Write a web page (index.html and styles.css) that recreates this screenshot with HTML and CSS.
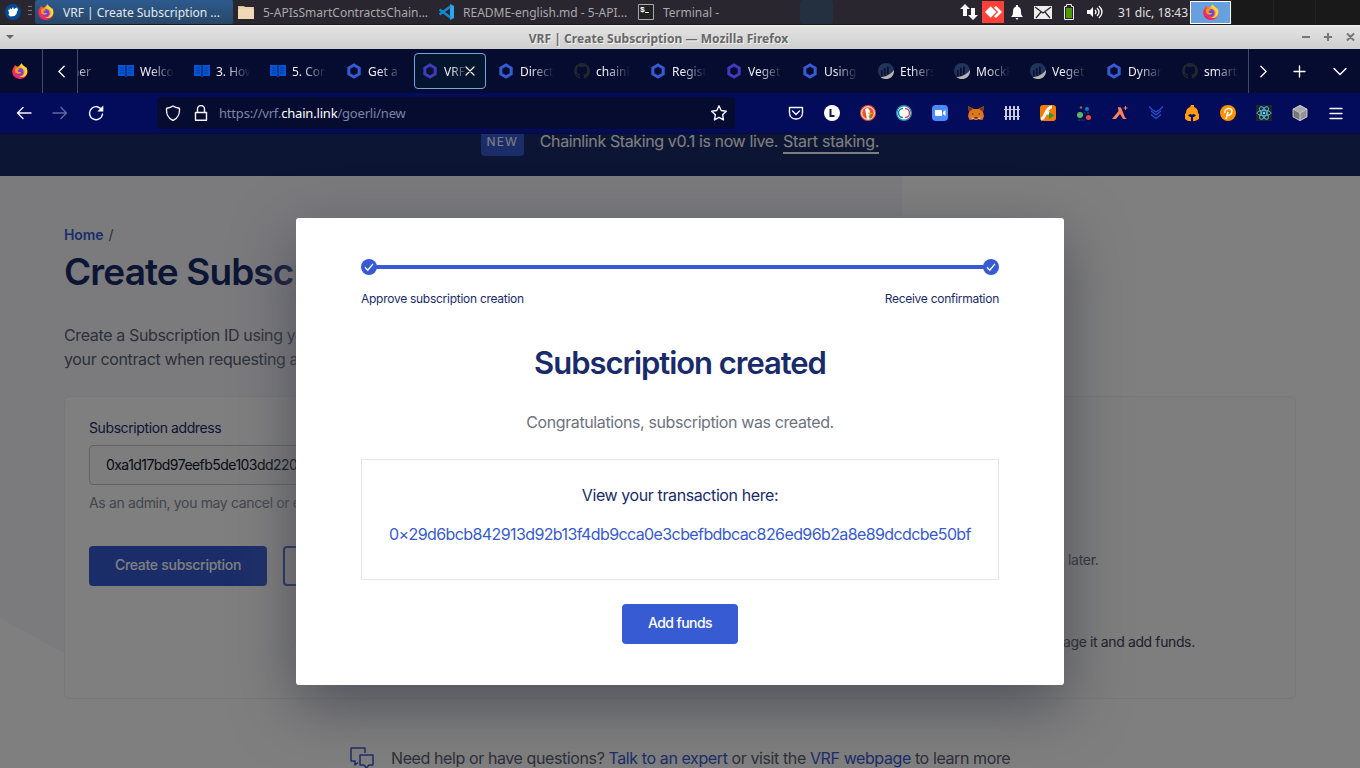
FILE: index.html
```html
<!DOCTYPE html>
<html lang="en">
<head>
<meta charset="utf-8">
<title>VRF | Create Subscription</title>
<link rel="stylesheet" href="styles.css">
</head>
<body>
<svg class="defs" aria-hidden="true">
  <defs>
    <radialGradient id="fx" cx=".75" cy=".15" r="1"><stop offset="0" stop-color="#fff44f"/><stop offset=".35" stop-color="#ff980e"/><stop offset=".65" stop-color="#ff3647"/><stop offset="1" stop-color="#e31587"/></radialGradient>
    <symbol id="firefox" viewBox="0 0 16 16"><path fill="url(#fx)" d="M2.2 3.6 3 2l1.6 1.5 2 .1L9.600 .2l1.200 2 3 2.300c2.300 3.200 1.900 7-.4 9.300-3 3-8 2.900-11 0C.1 11.500-.4 7.500 1.200 5z"/><circle cx="7.800" cy="8.700" r="3.700" fill="#7542e5"/><path fill="#ff9a13" d="M3.300 5.500c2-1.200 3.600-.4 5 .6-1.700.3-2.500 1-2.700 1.800.6 1.300 2.500 1.300 3.600 1.100-.7 1.900-3 2.300-5 1.100-1.200-1-1.500-2.800-.9-4.600z"/><path fill="#ffd53c" d="M9.600.2c0 2.500 2.600 3.500 2.900 6.500 1 4-2 7-5.500 6.800 5 2 9-1.500 8.300-6.500-.3-1.500-1-2.600-1.500-3.200v1.500C13 3.200 10.500 3 9.600.2z"/></symbol>
    <symbol id="hex" viewBox="0 0 16 16"><path fill="none" stroke="currentColor" stroke-width="3" d="m8 2 5.200 3v6L8 14l-5.200-3V5z"/></symbol>
    <symbol id="book" viewBox="0 0 16 16"><path fill="#0056d6" d="M0 2h7l1 .8L9 2h7v11H9.500L8 14l-1.500-1H0z"/><path d="M8 3v10" stroke="#060c30" stroke-width=".9"/><path d="M2 5h4M2 7.500h4M2 10h4M10 5h4M10 7.500h4M10 10h4" stroke="#06388f" stroke-width=".9"/></symbol>
    <symbol id="github" viewBox="0 0 16 16"><path fill="#22272e" d="M8 0a8 8 0 0 0-2.500 15.600c.4 0 .5-.2.500-.4v-1.500c-2.200.5-2.700-1-2.700-1-.4-.9-.9-1.200-.9-1.200-.7-.5.100-.5.100-.5.800.100 1.200.9 1.200.9.700 1.200 1.900.9 2.300.7.100-.5.300-.9.500-1.100-1.800-.2-3.600-.9-3.600-4 0-.9.300-1.600.8-2.100-.100-.2-.4-1 .100-2.200 0 0 .7-.2 2.200.8a7.600 7.600 0 0 1 4 0c1.500-1 2.200-.8 2.200-.8.400 1.200.2 2 .100 2.200.5.500.8 1.200.8 2.100 0 3.100-1.900 3.800-3.700 4 .3.300.6.800.6 1.500v2.200c0 .2.100.5.500.4A8 8 0 0 0 8 0z"/></symbol>
    <symbol id="ether" viewBox="0 0 16 16"><circle cx="8" cy="8" r="8" fill="#203559"/><path fill="#070c31" d="M3 7h1.600v6L3 13.500zM6 5h1.600v7.500L6 13zM9 3.500h1.700v7L9 12z"/><path fill="#b7b3ae" d="M2.500 14.200C8 14 13 11 16 7c.3 6-4 9-8 9-2 0-4-.7-5.500-1.800z"/></symbol>
    <symbol id="check" viewBox="0 0 16 16"><circle cx="8" cy="8" r="8" fill="#375bd2"/><path d="m4 8.300 2.800 2.900L12 4.800" fill="none" stroke="#fff" stroke-width="1.300"/></symbol>
  </defs>
</svg>

<header class="panel">
  <div class="panel-left">
    <svg class="mouse" viewBox="0 0 16 16"><circle cx="8" cy="8" r="8" fill="#034a94"/><path fill="#fff" d="M3 5.500 4.500 6 5 4l1.500 1.500L8 3l.8 2L12 3.500l1 2.500-1 1.500L11.500 10l-2 2-4 .5L3.500 11 4 9z"/></svg>
    <span class="grip"></span>
    <div class="task task-active"><svg class="i16"><use href="#firefox"/></svg><span>VRF | Create Subscription ...</span></div>
    <div class="task task-files"><svg class="i16" viewBox="0 0 16 16"><path fill="#d7b98c" d="M0 2h6l1 1h9v12H0z"/><path fill="#efd9b7" d="M0 5h16v10H0z"/><path stroke="#fff0d7" d="M1 4h14"/></svg><span>5-APIsSmartContractsChain...</span></div>
    <div class="task task-code"><svg class="i16" viewBox="0 0 16 16"><path fill="#29a9ee" d="m12 0 4 2v12l-4 2z"/><path fill="none" stroke="#168bd3" stroke-width="2.200" d="m12.500 2.500-11 8M1.500 5.500l11 8"/></svg><span>README-english.md - 5-API...</span></div>
    <div class="task task-term"><svg class="i16" viewBox="0 0 16 16"><path fill="#222" stroke="#aaa" d="M.5.500h15v15H.500z"/><text x="2" y="8" class="prompt">$</text><path stroke="#fff" d="M7 8.500h4"/></svg><span>Terminal -</span></div>
    <span class="ghost"></span>
  </div>
  <div class="tray">
    <svg class="t-net" viewBox="0 0 18 16"><path fill="#fff" d="m5 0 5 5H7v7H3V5H0zm8 16-5-5h3V4h4v7h3z"/></svg>
    <span class="anydesk"><svg viewBox="0 0 18 12"><path fill="#fff" d="m6 0 6 6-6 6-6-6zm5 0h1l6 6-6 6h-1l-1.500-1.500L14 6 9.500 1.500z"/></svg></span>
    <svg class="t-bell" viewBox="0 0 12 15"><path fill="#fff" d="M5 0h2v1.500c2 .5 3 2.500 3 5 0 3 .5 4 2 5.500H0c1.500-1.500 2-2.500 2-5.500 0-2.500 1-4.500 3-5zM4.500 13h3L6 15z"/></svg>
    <svg class="t-mail" viewBox="0 0 18 13"><path fill="#eee" d="M0 0h18v13H0z"/><path fill="none" stroke="#26242b" stroke-width="1.200" d="m1 1 8 6 8-6M2 12l5-6m9 6-5-6"/></svg>
    <svg class="t-bat" viewBox="0 0 10 16"><path fill="none" stroke="#eee" d="M.500 2.500h2v-2h5v2h2v13h-9z"/><path fill="#4e9a06" d="M2 4h6v10H2z"/></svg>
    <svg class="t-vol" viewBox="0 0 16 14"><path fill="#fff" d="M0 5h3l3-3v10L3 9H0z"/><path fill="none" stroke="#fff" stroke-width="1.300" d="M8 5q2 2 0 4M10 3q4 4 0 8M12 1q6 6 0 12"/></svg>
    <span class="clock">31 dic, 18:43</span>
    <span class="desk desk-on"><svg class="i16"><use href="#firefox"/></svg></span><span class="desk"></span><span class="desk"></span><span class="desk desk-last"></span>
  </div>
</header>

<div class="titlebar">
  <svg class="menu-arrow" viewBox="0 0 8 4"><path fill="#666" d="M0 0h8L4 4z"/></svg>
  <span class="win-title">VRF | Create Subscription — Mozilla Firefox</span>
  <svg class="win-btns" viewBox="0 0 54 10"><path fill="none" stroke="#777" stroke-width="2" d="M1 5h8M23 5h8M27 1v8M46 1.500l7 7M53 1.500l-7 7"/></svg>
</div>

<div class="tabs">
  <div class="fx-view"><svg class="i16"><use href="#firefox"/></svg></div>
  <div class="scroll scroll-l"><svg viewBox="0 0 8 14"><path d="M7 1 1 7l6 6"/></svg></div>
  <div class="tab-strip">
    <div class="tab tab-cut"><i class="i16"></i><span>cher</span></div>
    <div class="tab"><svg class="i16"><use href="#book"/></svg><span>Welco</span></div>
    <div class="tab"><svg class="i16"><use href="#book"/></svg><span>3. How</span></div>
    <div class="tab"><svg class="i16"><use href="#book"/></svg><span>5. Con</span></div>
    <div class="tab"><svg class="i16 blue"><use href="#hex"/></svg><span>Get a</span></div>
    <div class="tab tab-on"><svg class="i16 violet"><use href="#hex"/></svg><span>VRF</span><svg class="close" viewBox="0 0 8 8"><path d="m0 0 8 8M8 0 0 8"/></svg></div>
    <div class="tab"><svg class="i16 blue"><use href="#hex"/></svg><span>Direct</span></div>
    <div class="tab"><svg class="i16"><use href="#github"/></svg><span>chainl</span></div>
    <div class="tab"><svg class="i16 blue"><use href="#hex"/></svg><span>Regist</span></div>
    <div class="tab"><svg class="i16 violet"><use href="#hex"/></svg><span>Veget</span></div>
    <div class="tab"><svg class="i16 blue"><use href="#hex"/></svg><span>Using</span></div>
    <div class="tab"><svg class="i16"><use href="#ether"/></svg><span>Ethers</span></div>
    <div class="tab"><svg class="i16"><use href="#ether"/></svg><span>MockF</span></div>
    <div class="tab"><svg class="i16"><use href="#ether"/></svg><span>Veget</span></div>
    <div class="tab"><svg class="i16 blue"><use href="#hex"/></svg><span>Dynar</span></div>
    <div class="tab"><svg class="i16"><use href="#github"/></svg><span>smart</span></div>
  </div>
  <div class="tab-tools">
    <svg class="chev-r" viewBox="0 0 8 14"><path d="m1 1 6 6-6 6"/></svg>
    <svg class="plus" viewBox="0 0 12 12"><path d="M6 0v12M0 6h12"/></svg>
    <svg class="chev-d" viewBox="0 0 12 7"><path d="m0 .5 6 6 6-6"/></svg>
  </div>
</div>

<div class="nav">
  <div class="nav-btns">
    <svg class="i16" viewBox="0 0 16 16"><path d="M15 8H1.500M7 2.500 1.500 8 7 13.500"/></svg>
    <svg class="i16 dim" viewBox="0 0 16 16"><path d="M1 8h13.500M9 2.500 14.500 8 9 13.500"/></svg>
    <svg class="i16" viewBox="0 0 16 16"><path d="M14 5.500A6.500 6.500 0 1 0 14.500 9"/><path class="solid" d="M15.300.5v6H9.300z"/></svg>
  </div>
  <div class="url">
    <svg class="i16" viewBox="0 0 16 16"><path d="M8 1c2 1.600 4.300 2 6.300 2.200.8 5-1.500 10-6.300 12.300C3.200 13.200.9 8.200 1.700 3.200 3.700 3 6 2.600 8 1z"/></svg>
    <svg class="i16 lock" viewBox="0 0 16 16"><path d="M2.500 7.500h11v7.700h-11zM4.500 7.500V4a3.500 3.500 0 0 1 7 0v3.500"/></svg>
    <span class="addr">https://vrf.<b>chain.link</b>/goerli/new</span>
    <svg class="i16 star" viewBox="0 0 16 16"><path d="m8 .8 2.200 4.700 5.100.7-3.700 3.500.9 5.200L8 12.400l-4.500 2.500.9-5.200L.7 6.200l5.100-.7z"/></svg>
  </div>
  <div class="exts">
    <svg viewBox="0 0 16 16"><path class="ln" d="M1.500 2.500h13V8c0 8-13 8-13 0zM4.500 6 8 9.500 11.500 6"/></svg>
    <svg viewBox="0 0 16 16"><circle cx="8" cy="8" r="8" fill="#fff"/><path d="M6.500 4v7h4" fill="none" stroke="#111b43" stroke-width="2"/></svg>
    <svg viewBox="0 0 16 16"><circle cx="8" cy="8" r="8" fill="#e8532c"/><circle cx="8" cy="8" r="6.300" fill="none" stroke="#fff"/><path fill="#fff" d="M5 4c3-2 5 0 5 4l-1 6H7z"/><path fill="#f7b500" d="M8 7.500 13 8l-4 2z"/><path fill="#3ca344" d="m8 11 4-.5V13z"/></svg>
    <svg viewBox="0 0 16 16"><circle cx="8" cy="8" r="7.300" fill="#fff" stroke="#2191bd" stroke-width="1.400"/><path fill="none" stroke="#1684b4" stroke-width="1.500" d="M7 3.500a4.500 4.500 0 0 0 0 9"/><path fill="none" stroke="#e2443a" stroke-width="1.500" d="M9 3.500a4.500 4.500 0 0 1 0 9"/></svg>
    <svg viewBox="0 0 16 16"><rect width="16" height="16" rx="4" fill="#4a8cff"/><path fill="#fff" d="M3 5h6q1 0 1 1v5H4q-1 0-1-1zm8 2 2.500-2v6L11 9z"/></svg>
    <svg viewBox="0 0 16 16"><path fill="#e2761b" d="m0 1 6 3h4l6-3-1 6 1 4-1.500 4-4-1-1 1h-3l-1-1-4 1L0 11l1-4z"/><path fill="#763d16" d="m0 1 5 3-4 3zm16 0-5 3 4 3z"/><path fill="#233447" d="m4 8 2 1.500H4zm8 0-2 1.500h2zM6.500 12h3v1.500h-3z"/><path fill="#d7c1b3" d="m5 12 1 2-3 .5zm6 0-1 2 3 .5z"/></svg>
    <svg viewBox="0 0 16 16"><path stroke="#c9cae0" stroke-width="2" d="M2 1v14M6 1v14M10 1v14M14 1v14"/><path stroke="#c9cae0" d="M0 4.500h16M0 11.500h16"/></svg>
    <svg viewBox="0 0 16 16"><rect width="16" height="16" rx="3" fill="#f57c00"/><path fill="none" stroke="#fff" stroke-width="3" d="M1 14C6 14 5 2 12 2M5 8h5"/><path fill="#149b48" d="m9 7 5 3.500L9 14z"/></svg>
    <svg viewBox="0 0 16 16"><circle cx="4" cy="10" r="3" fill="#58b868"/><circle cx="11" cy="4" r="2" fill="#087fc3"/><circle cx="12.500" cy="12.500" r="2.500" fill="#f04938"/><circle cx="5" cy="2.500" r="1.300" fill="#77763b"/><path stroke="#34405c" stroke-dasharray="2 1" d="M2 15h7M8 8h5"/></svg>
    <svg viewBox="0 0 16 16"><path fill="#ff805f" d="m6 2 3 .5 4 10 2 1.500h-4L8 9l-4 5H0l5-6 1.500-2z"/><path stroke="#ff805f" d="M13.500 1v4M11.500 3h4"/></svg>
    <svg viewBox="0 0 16 16"><path fill="none" stroke="#2852cf" stroke-width="1.300" d="m1 1.500 3 3 4 2.500 4-2.500 3-3M3 6l5 4 5-4M3 9.500l5 4 5-4"/></svg>
    <svg viewBox="0 0 16 16"><path fill="#ff9c12" d="M7 0h3v2c3 1 4 3 4 6l1 1v5l-4 2H9v-4h1l2-2-3-1-1 1-1-1-3 1 2 2h1v4H4l-3-2V9l1-1c0-3 1-5 4-6z"/></svg>
    <svg viewBox="0 0 16 16"><circle cx="8" cy="8" r="8" fill="#ff9100"/><path fill="none" stroke="#fff" stroke-width="1.500" d="m6 14 2-7M5 8c-1-5 7-6 7-2s-4 5-5 4"/></svg>
    <svg viewBox="0 0 16 16"><path fill="#20232a" d="M0 0h16v16H0z"/><g fill="none" stroke="#54b9d1"><ellipse cx="8" cy="8" rx="7" ry="2.700"/><ellipse cx="8" cy="8" rx="7" ry="2.700" transform="rotate(60 8 8)"/><ellipse cx="8" cy="8" rx="7" ry="2.700" transform="rotate(120 8 8)"/></g><circle cx="8" cy="8" r="1.300" fill="#61dafb"/></svg>
    <svg viewBox="0 0 16 16"><path fill="#aaa" d="m8 0 7 4-7 4-7-4z"/><path fill="#777" d="m1 4 7 4v8l-7-4z"/><path fill="#929292" d="m15 4-7 4v8l7-4z"/><path fill="none" stroke="#ddd" stroke-width=".8" d="m8 .4 7 3.800v7.600L8 15.600l-7-3.800V4.200zM1 4l7 4 7-4M8 8v8"/></svg>
    <svg viewBox="0 0 16 16"><path class="ln" d="M2 3.500h12M2 8.500h12M2 13.500h12"/></svg>
  </div>
</div>

<main class="page">
  <div class="banner"><span class="badge">NEW</span><span class="banner-text">Chainlink Staking v0.1 is now live.</span><a class="banner-link">Start staking.</a></div>
  <div class="content">
    <div class="crumb"><a>Home</a><span>/</span></div>
    <h1>Create Subscription</h1>
    <p class="intro">Create a Subscription ID using your wallet<br>your contract when requesting a random</p>
    <section class="card">
      <div class="form">
        <label>Subscription address</label>
        <div class="field">0xa1d17bd97eefb5de103dd220</div>
        <p class="hint">As an admin, you may cancel or edit</p>
        <div class="actions"><a class="btn">Create subscription</a><a class="btn-outline"></a></div>
      </div>
      <div class="steps"><p class="step-a">later.</p><p class="step-b">age it and add funds.</p></div>
    </section>
    <div class="help">
      <svg viewBox="0 0 24 24"><path d="M8 15.500l-3 2.500v-4H1V1h14v5M10 8h13v10h-4l-2.500 3L14 18h-4z"/></svg>
      <p>Need help or have questions? <a>Talk to an expert</a> or visit the <a>VRF webpage</a> to learn more</p>
    </div>
  </div>
  <div class="overlay">
    <div class="modal">
      <div class="progress"><svg class="i16"><use href="#check"/></svg><span class="line"></span><svg class="i16"><use href="#check"/></svg></div>
      <div class="stages"><span class="stage-a">Approve subscription creation</span><span class="stage-b">Receive confirmation</span></div>
      <h2>Subscription created</h2>
      <p class="congrats">Congratulations, subscription was created.</p>
      <div class="tx"><p>View your transaction here:</p><a>0×29d6bcb842913d92b13f4db9cca0e3cbefbdbcac826ed96b2a8e89dcdcbe50bf</a></div>
      <a class="btn add">Add funds</a>
    </div>
  </div>
</main>
</body>
</html>
```
FILE: styles.css
```css
* { box-sizing: border-box; }
body { margin: 0; width: 1360px; height: 768px; overflow: hidden; display: flex; flex-direction: column; font-family: Inter, "Liberation Sans", sans-serif; }
h1, h2, p { margin: 0; }
.defs { position: absolute; width: 0; height: 0; }
.i16 { width: 16px; height: 16px; flex: none; }

/* desktop panel */
.panel { height: 25px; flex: none; display: flex; justify-content: space-between; background: #29262f; border-bottom: 1px solid #1b1a1e; font: 12px "Noto Sans", sans-serif; color: #aaa9ab; }
.panel-left { display: flex; align-items: center; padding-left: 5px; }
.mouse { width: 16px; height: 16px; }
.grip { width: 4px; height: 12px; margin: 0 3px 0 7px; background: repeating-linear-gradient(#77757a 0 1px, transparent 1px 4px); }
.task { height: 24px; display: flex; align-items: center; gap: 9px; white-space: nowrap; }
.task-active { width: 198px; padding-left: 3px; background: linear-gradient(#2d5a8e, #284767); border-radius: 2px; color: #e4e8ed; }
.task-files { padding-left: 5px; width: 205px; }
.task-code { width: 200px; }
.task-term { width: 162px; }
.prompt { fill: #fff; font: bold 8px "Liberation Mono", monospace; }
.ghost { width: 33px; height: 24px; background: #24303f; border-radius: 3px; }
.tray { display: flex; align-items: center; }
.t-net { width: 18px; height: 16px; margin-right: 4px; }
.anydesk { width: 22px; height: 22px; background: #ff4137; display: grid; place-items: center; margin-right: 7px; }
.anydesk svg { width: 17px; height: 12px; }
.t-bell { width: 12px; height: 15px; margin-right: 11px; }
.t-mail { width: 18px; height: 13px; margin-right: 12px; }
.t-bat { width: 10px; height: 16px; margin-right: 13px; }
.t-vol { width: 16px; height: 14px; margin-right: 15px; }
.clock { width: 72px; color: #e0e0e1; white-space: nowrap; }
.desk { width: 42px; height: 24px; background: #191919; border-left: 1px solid #222; }
.desk-on { width: 41px; height: 23px; background: #68a0df; border: 1px solid #fff; display: grid; place-items: center; }
.desk-last { width: 45px; }

/* window title */
.titlebar { height: 24px; flex: none; display: flex; align-items: center; justify-content: space-between; padding: 0 5px 0 6px; background: linear-gradient(#f5f5f5, #e2e2e2 2px, #cfcfcf); color: #676767; font: bold 12px "Noto Sans", sans-serif; text-shadow: 1px 1px #f2f2f2; }
.menu-arrow { width: 8px; height: 4px; }
.win-title { padding-top: 2px; margin-left: 2px; letter-spacing: .04px; }
.win-btns { width: 54px; height: 10px; }

/* tabs */
.tabs { height: 44px; flex: none; display: flex; background: #060c30; font: 12px "Noto Sans", sans-serif; color: #f0f1fa; }
.tabs svg path { stroke-linecap: round; }
.fx-view { width: 43px; border-right: 1px solid #43476a; display: grid; place-items: center; padding-right: 3px; }
.scroll { width: 35px; border-right: 1px solid #43476a; display: grid; place-items: center; padding-left: 2px; }
.scroll svg, .chev-r { width: 7px; height: 13px; }
.scroll path, .tab-tools path { fill: none; stroke: #fff; stroke-width: 1.500; }
.close path { fill: none; stroke: #fff; stroke-width: 1.200; }
.tab-strip { width: 1170px; flex: none; display: flex; overflow: hidden; align-items: center; }
.tab { width: 72px; height: 36px; flex: none; margin: 0 2px; padding-left: 8px; display: flex; align-items: center; gap: 6px; white-space: nowrap; }
.tab-cut { margin-left: -44px; padding-left: 10px; }
.tab span { width: 34px; -webkit-mask-image: linear-gradient(90deg, #000 30%, transparent); mask-image: linear-gradient(90deg, #000 30%, transparent); }
.tab-on { border: 1px solid #7ba2e6; border-radius: 4px; background: #05152f; padding-left: 7px; }
.tab-on span { width: 23px; }
.tab-on .close { width: 8px; height: 8px; margin-left: -7px; overflow: visible; }
.blue { color: #375bd2; }
.violet { color: #4339bd; }
.tab-tools { flex: 1; border-left: 1px solid #43476a; display: flex; align-items: center; padding-left: 11px; }
.plus { width: 11px; height: 11px; margin-left: 27px; overflow: visible; }
.chev-d { width: 12px; height: 7px; margin-left: 29px; overflow: visible; }

/* navigation */
.nav { height: 41px; flex: none; display: flex; align-items: center; background: #030b5b; border-bottom: 1px solid #080b35; }
.nav-btns { width: 157px; display: flex; gap: 20px; padding-left: 16px; }
.nav-btns path, .url path, .ln { fill: none; stroke: #f4f5ff; stroke-width: 1.400; stroke-linejoin: round; stroke-linecap: round; }
.nav-btns .dim { opacity: .4; }
.nav-btns .solid { fill: #fff; stroke: none; }
.url { width: 578px; height: 32px; background: #060c30; border-radius: 4px; display: flex; align-items: center; padding: 0 8px; font: 13px "Noto Sans", sans-serif; color: #7e83a6; }
.lock { margin-left: 12px; }
.addr { margin-left: 10px; flex: 1; letter-spacing: -.19px; }
.addr b { font-weight: 400; color: #fff; }
.exts { display: flex; gap: 20px; margin-left: 53px; }
.exts svg { width: 16px; height: 16px; flex: none; }

/* page */
.page { height: 634px; flex: none; position: relative; overflow: hidden; background: #fff; }
.banner { height: 42px; background: #1a2b6b; display: flex; align-items: flex-start; justify-content: center; color: #fff; font-size: 16px; line-height: 20px; white-space: nowrap; overflow: hidden; }
.badge { width: 43px; height: 26px; margin-top: -4px; margin-right: 16px; border-radius: 4px; background: #375bd2; font-size: 12px; line-height: 24px; letter-spacing: 1.200px; text-align: center; }
.banner-text { margin-top: -3px; margin-right: 5px; letter-spacing: -.38px; }
.banner-link { margin-top: -3px; height: 23px; border-bottom: 2px solid #fff; letter-spacing: -.25px; }
.content { height: 592px; padding: 49px 64px 0; background: linear-gradient(#f6f7fd, #f6f7fd) no-repeat; background-size: 902px 522px; color: #5b6070; position: relative; }
.content::before { content: ""; position: absolute; left: 0; top: 442px; width: 145px; height: 80px; background: #fff; clip-path: polygon(0 0, 100% 100%, 0 100%); }
.crumb { height: 20px; display: flex; gap: 5px; font-size: 14px; line-height: 19px; letter-spacing: -.1px; }
.crumb a { color: #375bd2; font-weight: 600; }
h1 { height: 52px; margin-top: 1px; font-size: 37px; line-height: 52px; font-weight: 600; color: #1a2b6b; letter-spacing: -.9px; }
.intro { margin-top: 25px; height: 48px; font-size: 16px; line-height: 24px; letter-spacing: -.36px; }
.card { position: relative; height: 303px; margin-top: 25px; border: 1px solid #eff0f2; border-radius: 6px; display: grid; grid-template-columns: 1fr 1fr; background: #fff; }
.form { padding: 20px 24px; }
.form label { display: block; font-size: 14px; line-height: 21px; color: #1a2b6b; letter-spacing: -.4px; }
.field { height: 40px; margin-top: 7px; border: 1px solid #c4c7cf; border-radius: 4px; background: #fafafa; padding-left: 16px; font-size: 14px; line-height: 37px; color: #0c162c; letter-spacing: -.55px; }
.hint { margin-top: 8px; font-size: 14px; line-height: 20px; color: #858a96; letter-spacing: -.35px; }
.actions { display: flex; gap: 16px; margin-top: 33px; }
.btn { width: 178px; height: 40px; border-radius: 4px; background: #375bd2; color: #fff; font-size: 14px; font-weight: 500; line-height: 38px; text-align: center; letter-spacing: -.28px; }
.btn-outline { width: 120px; border: 2px solid #375bd2; border-radius: 4px; }
.steps { padding: 153px 0 0 386px; font-size: 14px; line-height: 20px; white-space: nowrap; background: #fcfcfd; border-radius: 6px; letter-spacing: -.3px; }
.step-a { padding-left: 2px; }
.step-b { margin-top: 62px; margin-left: -3px; color: #3c4252; letter-spacing: -.38px; }
.help { margin: 47px 0 0 286px; display: flex; gap: 17px; font-size: 16px; line-height: 24px; white-space: nowrap; }
.help svg { width: 24px; height: 24px; flex: none; margin-top: 1px; }
.help path { fill: none; stroke: #375bd2; stroke-width: 1.500; stroke-linejoin: round; }
.help a { color: #375bd2; }
.help p { letter-spacing: -.4px; }

/* dialog */
.overlay { position: absolute; inset: 0; background: rgba(0, 0, 0, .5); display: flex; align-items: center; justify-content: center; }
.modal { width: 768px; height: 467px; margin-top: 1px; border-radius: 3px; padding: 41px 65px 0; background: #fff; box-shadow: 0 20px 60px rgba(75, 77, 87, .9); text-align: center; display: flex; flex-direction: column; align-items: center; color: #1a2b6b; white-space: nowrap; }
.progress { width: 100%; display: flex; align-items: center; }
.line { flex: 1; height: 4px; margin: 0 -1px; background: #375bd2; }
.stages { width: 100%; margin-top: 14px; display: flex; justify-content: space-between; font-size: 12px; line-height: 20px; letter-spacing: -.27px; }
h2 { margin-top: 30px; font-size: 31px; line-height: 48px; font-weight: 600; letter-spacing: -1.050px; }
.congrats { margin-top: 23px; font-size: 16px; line-height: 24px; color: #6d7380; letter-spacing: -.39px; }
.tx { width: 100%; height: 121px; margin-top: 25px; border: 1px solid #e5e6e8; padding-top: 23px; font-size: 16px; line-height: 24px; }
.tx p { letter-spacing: -.4px; }
.tx a { display: block; margin-top: 15px; color: #375bd2; letter-spacing: -.6px; }
.add { width: 116px; margin-top: 24px; letter-spacing: -.6px; }
```
